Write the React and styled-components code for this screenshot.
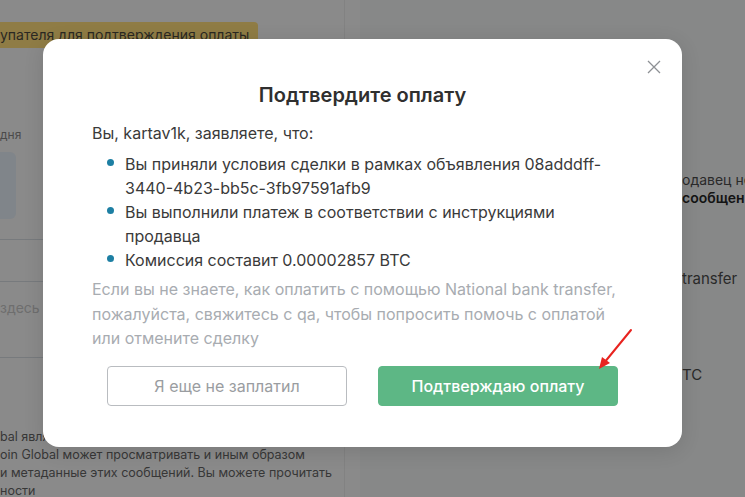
import styled, { createGlobalStyle } from "styled-components";

// the page behind the dialog is drawn already dimmed (solid colours)
const GlobalStyle = createGlobalStyle`
  html, body {
    margin: 0;
    padding: 0;
    background: #8a8a8a;
    overflow: hidden;
  }
  body {
    font-family: Inter, "Noto Sans", sans-serif;
    color: #333;
  }
`;

const Screen = styled.div`
  position: relative;
  width: 745px;
  height: 497px;
  overflow: hidden;
  background: #8a8a8a;
`;

const Page = styled.div`
  display: grid;
  grid-template-columns: 345px 1fr;
  gap: 15px;
  height: 497px;
  overflow: hidden;
`;

const LeftCol = styled.div`
  display: flex;
  flex-direction: column;
  padding-top: 22px;
  border-right: 1px solid #828282;
`;

const Banner = styled.div`
  width: 258px;
  height: 26px;
  background: #8f7c45;
  border-radius: 0 4px 4px 0;
  font-size: 14px;
  line-height: 26px;
  white-space: nowrap;
  overflow: hidden;
  color: #2a2822;
`;

const Label = styled.div`
  margin-top: ${({ top }) => top}px;
  font-size: 12px;
  color: #4a4a4a;
  white-space: nowrap;
`;

const InputBox = styled.div`
  margin-top: 10px;
  width: 16px;
  height: 67px;
  background: #80858a;
  border-radius: 0 6px 6px 0;
`;

const Divider = styled.div`
  margin-top: ${({ top }) => top}px;
  height: 1px;
  background: #777a7d;
`;

const Placeholder = styled.div`
  margin-top: 17px;
  font-size: 14px;
  color: #6e6e6e;
`;

const Note = styled.div`
  margin-top: 70px;
  font-size: 12.5px;
  line-height: 18px;
  color: #373737;
  white-space: nowrap;
`;

const RightCol = styled.div`
  display: flex;
  flex-direction: column;
  padding-left: 322px;
  padding-top: 171px;
  background: #878888;
  font-size: 14px;
  white-space: nowrap;
  overflow: hidden;
`;

const Line = styled.div`
  margin-top: ${({ top }) => top || 0}px;
  line-height: 18px;
  font-weight: ${({ bold }) => (bold ? 600 : 400)};
  color: ${({ bold }) => (bold ? "#141414" : "#2a2a2a")};
  font-size: ${({ size }) => size || 14}px;
`;

const Overlay = styled.div`
  position: absolute;
  top: 0;
  left: 0;
  width: 745px;
  height: 497px;
  box-sizing: border-box;
  display: flex;
  justify-content: center;
  align-items: flex-start;
  padding: 39px 20px 0 0;
`;

const Modal = styled.div`
  position: relative;
  box-sizing: border-box;
  width: 639px;
  height: 408px;
  background: #fff;
  border-radius: 16px;
  padding: 72px 49px 0 49px;
  box-shadow: 0 4px 20px rgba(0, 0, 0, 0.12);
`;

const Close = styled.button`
  position: absolute;
  top: 21px;
  right: 21px;
  width: 14px;
  height: 14px;
  padding: 0;
  border: none;
  background: transparent;
  cursor: pointer;
  display: flex;
`;

const Title = styled.h2`
  margin: 0;
  position: absolute;
  left: 0;
  right: 0;
  top: 44px;
  text-align: center;
  font-size: 20px;
  font-weight: 600;
  color: #2f2f2f;
  line-height: 24px;
`;

const Intro = styled.p`
  margin: 10px 0 0;
  font-size: 16px;
  line-height: 24px;
  color: #3a3a3a;
`;

const List = styled.ul`
  list-style: none;
  margin: 7px 0 0;
  padding: 0 0 0 33px;
`;

const Item = styled.li`
  position: relative;
  font-size: 16px;
  line-height: 24px;
  color: #3a3a3a;

  &::before {
    content: "";
    position: absolute;
    left: -18px;
    top: 7px;
    width: 7px;
    height: 7px;
    border-radius: 50%;
    background: #1d7fa3;
  }
`;

const Hint = styled.p`
  margin: 5px 0 0;
  font-size: 16px;
  line-height: 24.5px;
  color: #a8acb1;
`;

const Buttons = styled.div`
  display: flex;
  justify-content: center;
  gap: 31px;
  margin-top: 15px;
`;

const Button = styled.button`
  width: 240px;
  height: 40px;
  border-radius: 4px;
  font-family: Inter, "Noto Sans", sans-serif;
  font-size: 16px;
  cursor: pointer;
  border: 1px solid ${({ primary }) => (primary ? "#5db785" : "#b9bcc0")};
  background: ${({ primary }) => (primary ? "#5db785" : "#fff")};
  color: ${({ primary }) => (primary ? "#fff" : "#9a9da1")};
  font-weight: ${({ primary }) => (primary ? 500 : 400)};
`;

const Arrow = styled.svg`
  position: absolute;
  left: 552px;
  top: 288px;
  pointer-events: none;
`;

export default function App() {
  return (
    <Screen>
      <GlobalStyle />
      <Page>
        <LeftCol>
          <Banner>упателя для подтверждения оплаты</Banner>
          <Label top={79}>дня</Label>
          <InputBox />
          <Divider top={20} />
          <Divider top={41} />
          <Placeholder>здесь</Placeholder>
          <Divider top={41} />
          <Note>
            bal является посредником и может хранить сообщения
            <br />
            oin Global может просматривать и иным образом
            <br />
            и метаданные этих сообщений. Вы можете прочитать
            <br />
            ности
          </Note>
        </LeftCol>
        <RightCol>
          <Line>одавец не</Line>
          <Line bold>сообщен</Line>
          <Line top={63} size={15}>transfer</Line>
          <Line top={78} size={15}>TC</Line>
        </RightCol>
      </Page>
      <Overlay>
        <Modal>
          <Close aria-label="Закрыть">
            <svg width="14" height="14" viewBox="0 0 14 14">
              <path d="M1 1 L13 13 M13 1 L1 13" stroke="#8d9094" strokeWidth="1.3" fill="none" />
            </svg>
          </Close>
          <Title>Подтвердите оплату</Title>
          <Intro>Вы, kartav1k, заявляете, что:</Intro>
          <List>
            <Item>Вы приняли условия сделки в рамках объявления 08adddff-3440-4b23-bb5c-3fb97591afb9</Item>
            <Item>Вы выполнили платеж в соответствии с инструкциями продавца</Item>
            <Item>Комиссия составит 0.00002857 BTC</Item>
          </List>
          <Hint>
            Если вы не знаете, как оплатить с помощью National bank transfer,
            пожалуйста, свяжитесь с qa, чтобы попросить помочь с оплатой или
            отмените сделку
          </Hint>
          <Buttons>
            <Button>Я еще не заплатил</Button>
            <Button primary>Подтверждаю оплату</Button>
          </Buttons>
          <Arrow width="40" height="44" viewBox="0 0 40 44">
            <path d="M36 3 L9 36" stroke="#e8231f" strokeWidth="2" strokeLinecap="round" fill="none" />
            <path d="M4 42 L7 30 L15 36 Z" fill="#e8231f" />
          </Arrow>
        </Modal>
      </Overlay>
    </Screen>
  );
}
